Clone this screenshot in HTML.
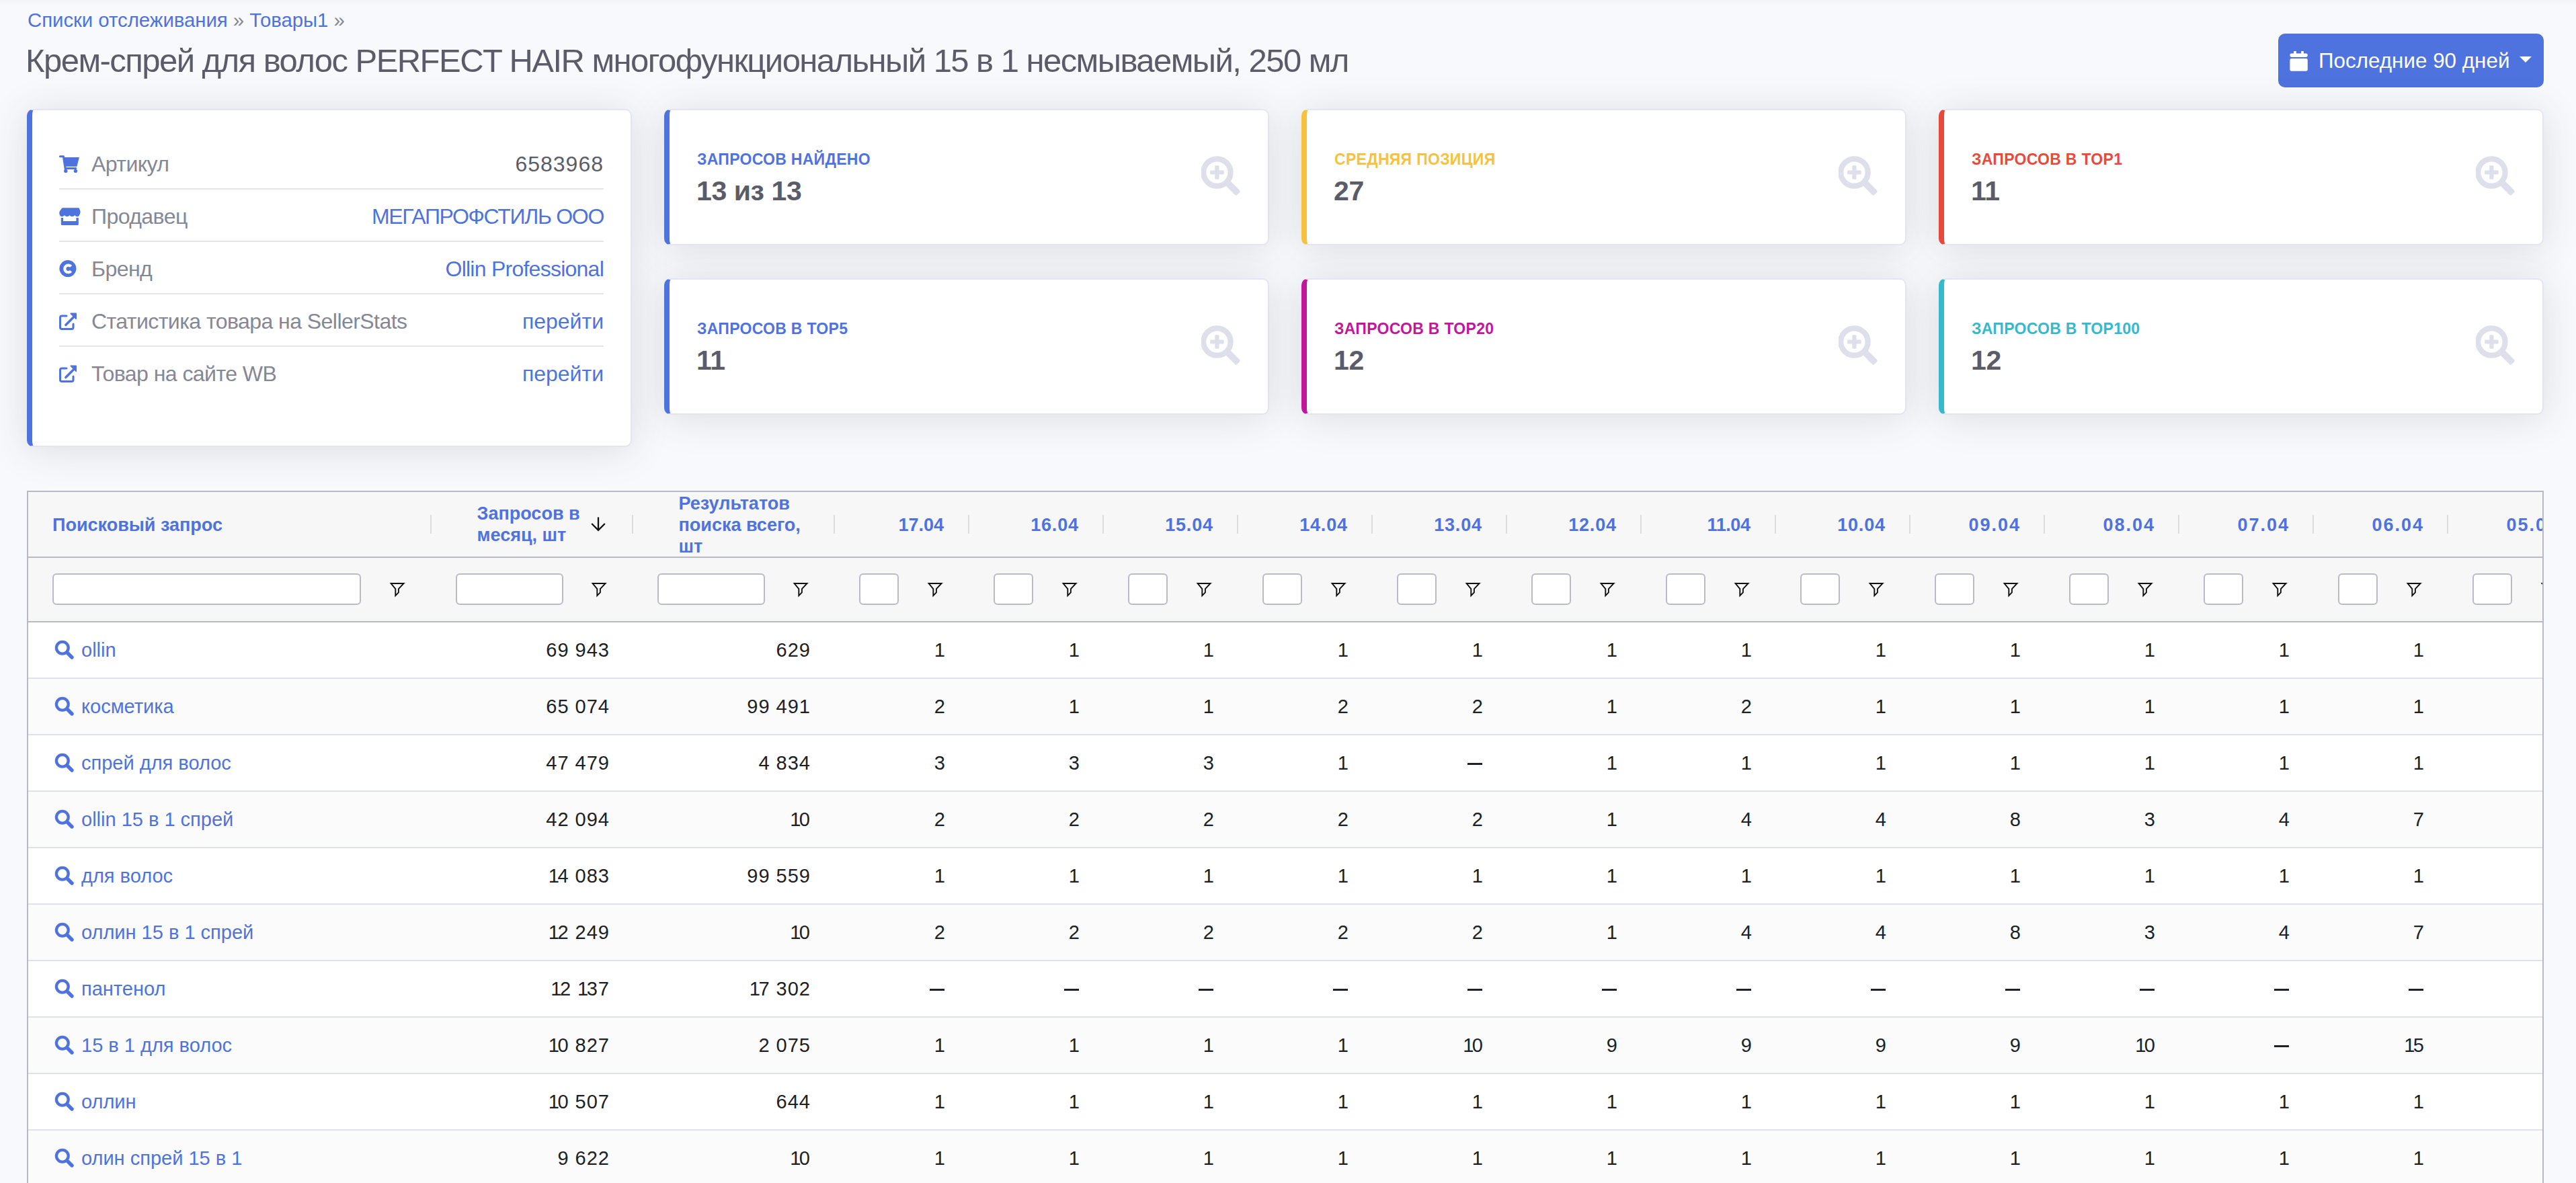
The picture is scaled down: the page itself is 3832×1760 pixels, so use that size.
<!DOCTYPE html>
<html><head><meta charset="utf-8">
<style>
*{box-sizing:border-box;margin:0;padding:0}
html,body{width:3832px;height:1760px;overflow:hidden;background:#f8f9fc linear-gradient(rgba(58,59,69,.03),rgba(58,59,69,0) 9px) no-repeat;font-family:"Liberation Sans",sans-serif;}
.abs{position:absolute}
.bc{left:41px;top:13px;font-size:29.3px;color:#4e73df;white-space:nowrap}
.title{left:38px;top:62px;font-size:49px;letter-spacing:-1.55px;color:#5a5c69;white-space:nowrap}
.btn{left:3389px;top:50px;width:395px;height:80px;background:#4e73df;border-radius:10px;color:#fff;font-size:32px}
.btn .t{position:absolute;left:60px;top:23px;font-size:31.4px;white-space:nowrap}
.btn svg{position:absolute}
.card{background:#fff;border-radius:10px;box-shadow:0 5px 56px rgba(58,59,69,.15);border:2px solid #e3e6f0;border-left:8px solid #4e73df}
.card .lb{display:none}
.info{left:40px;top:162px;width:900px;height:503px}
.row{position:absolute;left:40px;width:810px;height:78px;font-size:32px;color:#858796}
.row .ln{position:absolute;left:0;right:0;bottom:0;height:2px;background:#e6e6e6}
.row .k{position:absolute;left:48px;top:21.5px;letter-spacing:-0.55px;white-space:nowrap}
.row .v{position:absolute;right:0;top:21.5px;color:#4e73df;white-space:nowrap}
.row .ic{position:absolute;left:0;top:20px}
.stat{width:900px;height:203px}
.stat .l{position:absolute;left:41px;top:59.5px;font-size:23px;letter-spacing:0.3px;font-weight:bold;text-transform:uppercase;white-space:nowrap}
.stat .n{position:absolute;left:40px;top:96.5px;font-size:41px;letter-spacing:-0.4px;font-weight:bold;color:#5a5c69;white-space:nowrap}
.stat svg{position:absolute;left:791px;top:68px}
.tbl{left:40px;top:730px;width:3744px;height:1100px;border:2px solid #b7bac5;background:#fff;overflow:hidden}
.thead{position:absolute;left:0;top:0;width:3800px;height:98px;background:#f7f7f7;border-bottom:2px solid #b7bac5}
.frow{position:absolute;left:0;top:98px;width:3800px;height:96px;background:#f7f7f7;border-bottom:2px solid #b7bac5}
.sep{position:absolute;top:34px;width:2px;height:28px;background:#dcdcdc}
.hd{position:absolute;font-size:27px;font-weight:bold;color:#4e73df;white-space:nowrap;line-height:32px}
.dt{text-align:right}
.inp{position:absolute;height:47px;background:#fff;border:2px solid #b9bcc4;border-radius:6px}
.tr{position:absolute;left:0;width:3800px;height:84px;border-bottom:2px solid #dde2ec}
.td{position:absolute;font-size:29px;color:#1d2124;white-space:nowrap;line-height:32px}
.num{width:200px;text-align:right;letter-spacing:1px}
.tq{color:#4e73df}
.q{position:absolute}
.si{display:block}
.arr{position:absolute}
.dash{position:absolute;width:22.4px;height:3px;background:#1d2124}

</style></head><body>
<div class="abs bc">Списки отслеживания <span style="color:#858796">»</span> Товары1 <span style="color:#858796">»</span></div>
<div class="abs title">Крем-спрей для волос PERFECT HAIR многофункциональный 15 в 1 несмываемый, 250 мл</div>
<div class="abs btn">
<svg style="left:17px;top:26px" width="28" height="30" viewBox="0 0 28 30"><rect x="6.1" y="-0.4" width="3.8" height="6" rx="1.6" fill="#fff"/><rect x="17.1" y="-0.4" width="3.8" height="6" rx="1.6" fill="#fff"/><rect x="0.4" y="3.4" width="26.4" height="5.5" rx="2.4" fill="#fff"/><rect x="0.4" y="11" width="26.4" height="18.8" rx="2.4" fill="#fff"/></svg>
<div class="t">Последние 90 дней</div>
<svg style="left:359px;top:34px" width="18" height="10" viewBox="0 0 18 10"><path d="M0 0H18L9 9Z" fill="#fff"/></svg>
</div>

<div class="abs card info"><div class="lb" style="background:#4e73df"></div>
 <div class="row" style="top:40px"><svg class="ic" style="top:27px" width="32" height="28" viewBox="0 0 32 28"><path d="M1.5 1.7H6.4L9.8 24" fill="none" stroke="#4e73df" stroke-width="3.1" stroke-linecap="round" stroke-linejoin="round"/><path d="M7.4 3.6H29.2L25.9 16.2H9.9Z" fill="#4e73df" stroke="#4e73df" stroke-width="1.2" stroke-linejoin="round"/><rect x="9.5" y="18.1" width="16.8" height="2.8" rx="1.4" fill="#4e73df"/><circle cx="9.8" cy="23.4" r="2.7" fill="#4e73df"/><circle cx="24.4" cy="23.4" r="2.7" fill="#4e73df"/></svg><div class="k">Артикул</div><div class="v" style="color:#5a5c69;letter-spacing:1px">6583968</div><div class="ln"></div></div>
 <div class="row" style="top:118px"><svg class="ic" style="top:27px" width="32" height="28" viewBox="0 0 32 28"><path d="M6.5 0.3H28.5Q29.5 0.3 30 1.2L31.2 4.5Q32 7 31 9Q29.7 13.2 27 13.2Q24.6 13.2 23.2 11.2Q21.6 13.2 19.3 13.2Q17 13.2 15.5 11.2Q14 13.2 11.7 13.2Q9.5 13.2 7.9 11.2Q6.5 13.2 4.2 13.2Q1 13.2 0.3 9Q0 7 0.9 5L3.7 1.2Q4.3 0.3 5.5 0.3Z" fill="#4e73df"/><path d="M2.8 14.9H6V20H25.4V14.9H28.8V24.7Q28.8 26.1 27.4 26.1H4.2Q2.8 26.1 2.8 24.7Z" fill="#4e73df"/></svg><div class="k">Продавец</div><div class="v" style="letter-spacing:-1.3px">МЕГАПРОФСТИЛЬ ООО</div><div class="ln"></div></div>
 <div class="row" style="top:196px"><svg class="ic" style="top:27px" width="28" height="28" viewBox="0 0 28 28"><circle cx="12.9" cy="12.6" r="12.5" fill="#4e73df"/><path d="M17.6 9.4A5.3 5.3 0 1 0 17.6 16.4" fill="none" stroke="#fff" stroke-width="4.2"/></svg><div class="k">Бренд</div><div class="v" style="letter-spacing:-0.75px">Ollin Professional</div><div class="ln"></div></div>
 <div class="row" style="top:274px"><svg class="ic" style="top:27px" width="28" height="28" viewBox="0 0 28 28"><path d="M11 5H4Q1.5 5 1.5 7.5V22Q1.5 24.5 4 24.5H18.5Q21 24.5 21 22V17" fill="none" stroke="#4e73df" stroke-width="3" stroke-linecap="round"/><path d="M9.8 18.5L22.5 5.8" stroke="#4e73df" stroke-width="3.4" stroke-linecap="round"/><path d="M17.3 1.4H25.1V9.2Z" fill="#4e73df" stroke="#4e73df" stroke-width="1.8" stroke-linejoin="round"/></svg><div class="k">Статистика товара на SellerStats</div><div class="v">перейти</div><div class="ln"></div></div>
 <div class="row" style="top:352px"><svg class="ic" style="top:27px" width="28" height="28" viewBox="0 0 28 28"><path d="M11 5H4Q1.5 5 1.5 7.5V22Q1.5 24.5 4 24.5H18.5Q21 24.5 21 22V17" fill="none" stroke="#4e73df" stroke-width="3" stroke-linecap="round"/><path d="M9.8 18.5L22.5 5.8" stroke="#4e73df" stroke-width="3.4" stroke-linecap="round"/><path d="M17.3 1.4H25.1V9.2Z" fill="#4e73df" stroke="#4e73df" stroke-width="1.8" stroke-linejoin="round"/></svg><div class="k">Товар на сайте WB</div><div class="v">перейти</div></div>
</div>

<div class="abs card stat" style="left:988px;top:162px"><div class="lb" style="background:#4e73df"></div><div class="l" style="color:#4e73df">Запросов найдено</div><div class="n">13 из 13</div><svg width="62" height="62" viewBox="0 0 62 62"><circle cx="23.4" cy="24.5" r="20.2" fill="none" stroke="#dddfeb" stroke-width="8.2"/><rect x="20.3" y="14.2" width="6.2" height="20.6" rx="1.4" fill="#dddfeb"/><rect x="13.1" y="21.4" width="20.6" height="6.2" rx="1.4" fill="#dddfeb"/><rect x="-11" y="-4.9" width="22" height="9.8" rx="2.2" fill="#dddfeb" transform="translate(47.3 48.3) rotate(45)"/></svg></div>
<div class="abs card stat" style="left:1936px;top:162px;border-left-color:#f6c23e"><div class="lb"></div><div class="l" style="color:#f6c23e">Средняя позиция</div><div class="n">27</div><svg width="62" height="62" viewBox="0 0 62 62"><circle cx="23.4" cy="24.5" r="20.2" fill="none" stroke="#dddfeb" stroke-width="8.2"/><rect x="20.3" y="14.2" width="6.2" height="20.6" rx="1.4" fill="#dddfeb"/><rect x="13.1" y="21.4" width="20.6" height="6.2" rx="1.4" fill="#dddfeb"/><rect x="-11" y="-4.9" width="22" height="9.8" rx="2.2" fill="#dddfeb" transform="translate(47.3 48.3) rotate(45)"/></svg></div>
<div class="abs card stat" style="left:2884px;top:162px;border-left-color:#e74a3b"><div class="lb"></div><div class="l" style="color:#e74a3b">Запросов в TOP1</div><div class="n">11</div><svg width="62" height="62" viewBox="0 0 62 62"><circle cx="23.4" cy="24.5" r="20.2" fill="none" stroke="#dddfeb" stroke-width="8.2"/><rect x="20.3" y="14.2" width="6.2" height="20.6" rx="1.4" fill="#dddfeb"/><rect x="13.1" y="21.4" width="20.6" height="6.2" rx="1.4" fill="#dddfeb"/><rect x="-11" y="-4.9" width="22" height="9.8" rx="2.2" fill="#dddfeb" transform="translate(47.3 48.3) rotate(45)"/></svg></div>
<div class="abs card stat" style="left:988px;top:414px"><div class="lb" style="background:#4e73df"></div><div class="l" style="color:#4e73df">Запросов в TOP5</div><div class="n">11</div><svg width="62" height="62" viewBox="0 0 62 62"><circle cx="23.4" cy="24.5" r="20.2" fill="none" stroke="#dddfeb" stroke-width="8.2"/><rect x="20.3" y="14.2" width="6.2" height="20.6" rx="1.4" fill="#dddfeb"/><rect x="13.1" y="21.4" width="20.6" height="6.2" rx="1.4" fill="#dddfeb"/><rect x="-11" y="-4.9" width="22" height="9.8" rx="2.2" fill="#dddfeb" transform="translate(47.3 48.3) rotate(45)"/></svg></div>
<div class="abs card stat" style="left:1936px;top:414px;border-left-color:#c1179b"><div class="lb"></div><div class="l" style="color:#c1179b">Запросов в TOP20</div><div class="n">12</div><svg width="62" height="62" viewBox="0 0 62 62"><circle cx="23.4" cy="24.5" r="20.2" fill="none" stroke="#dddfeb" stroke-width="8.2"/><rect x="20.3" y="14.2" width="6.2" height="20.6" rx="1.4" fill="#dddfeb"/><rect x="13.1" y="21.4" width="20.6" height="6.2" rx="1.4" fill="#dddfeb"/><rect x="-11" y="-4.9" width="22" height="9.8" rx="2.2" fill="#dddfeb" transform="translate(47.3 48.3) rotate(45)"/></svg></div>
<div class="abs card stat" style="left:2884px;top:414px;border-left-color:#36b9cc"><div class="lb"></div><div class="l" style="color:#36b9cc">Запросов в TOP100</div><div class="n">12</div><svg width="62" height="62" viewBox="0 0 62 62"><circle cx="23.4" cy="24.5" r="20.2" fill="none" stroke="#dddfeb" stroke-width="8.2"/><rect x="20.3" y="14.2" width="6.2" height="20.6" rx="1.4" fill="#dddfeb"/><rect x="13.1" y="21.4" width="20.6" height="6.2" rx="1.4" fill="#dddfeb"/><rect x="-11" y="-4.9" width="22" height="9.8" rx="2.2" fill="#dddfeb" transform="translate(47.3 48.3) rotate(45)"/></svg></div>

<div class="abs tbl">
<div class="thead"></div><div class="frow"></div>
<div class="sep" style="left:598px"></div>
<div class="sep" style="left:898px"></div>
<div class="sep" style="left:1198px"></div>
<div class="sep" style="left:1398px"></div>
<div class="sep" style="left:1598px"></div>
<div class="sep" style="left:1798px"></div>
<div class="sep" style="left:1998px"></div>
<div class="sep" style="left:2198px"></div>
<div class="sep" style="left:2398px"></div>
<div class="sep" style="left:2598px"></div>
<div class="sep" style="left:2798px"></div>
<div class="sep" style="left:2998px"></div>
<div class="sep" style="left:3198px"></div>
<div class="sep" style="left:3398px"></div>
<div class="sep" style="left:3598px"></div>
<div class="hd" style="left:36px;top:32.5px">Поисковый запрос</div>
<div class="hd h2" style="left:667.5px;top:16px">Запросов в<br>месяц, шт</div>
<svg class="arr" style="left:836px;top:36px" width="24" height="24" viewBox="0 0 24 24"><path d="M12 1.4V20M2.2 11L12 20.8L21.8 11" fill="none" stroke="#111" stroke-width="2.3"/></svg>
<div class="hd h2" style="left:967.5px;top:0.5px">Результатов<br>поиска всего,<br>шт</div>
<div class="hd dt" style="left:1262px;top:33px;width:100px;letter-spacing:0px">17.04</div>
<div class="hd dt" style="left:1462.8px;top:33px;width:100px;letter-spacing:0.8px">16.04</div>
<div class="hd dt" style="left:1662.8px;top:33px;width:100px;letter-spacing:0.8px">15.04</div>
<div class="hd dt" style="left:1862.8px;top:33px;width:100px;letter-spacing:0.8px">14.04</div>
<div class="hd dt" style="left:2062.8px;top:33px;width:100px;letter-spacing:0.8px">13.04</div>
<div class="hd dt" style="left:2262.8px;top:33px;width:100px;letter-spacing:0.8px">12.04</div>
<div class="hd dt" style="left:2461.6px;top:33px;width:100px;letter-spacing:-0.4px">11.04</div>
<div class="hd dt" style="left:2662.8px;top:33px;width:100px;letter-spacing:0.8px">10.04</div>
<div class="hd dt" style="left:2864.0px;top:33px;width:100px;letter-spacing:2.0px">09.04</div>
<div class="hd dt" style="left:3064.0px;top:33px;width:100px;letter-spacing:2.0px">08.04</div>
<div class="hd dt" style="left:3264.0px;top:33px;width:100px;letter-spacing:2.0px">07.04</div>
<div class="hd dt" style="left:3464.0px;top:33px;width:100px;letter-spacing:2.0px">06.04</div>
<div class="hd dt" style="left:3664.0px;top:33px;width:100px;letter-spacing:2.0px">05.04</div>
<div class="inp" style="left:36px;top:121px;width:459px"></div>
<div style="position:absolute;left:537px;top:134px"><svg class="fi" width="24" height="24" viewBox="0 0 24 24"><path d="M2.6 2H21.6L13.9 10.1V15.4L9.3 20.1V10.1Z" fill="none" stroke="#111" stroke-width="1.9" stroke-linejoin="miter" stroke-miterlimit="6"/></svg></div>
<div class="inp" style="left:636px;top:121px;width:160px"></div>
<div style="position:absolute;left:837px;top:134px"><svg class="fi" width="24" height="24" viewBox="0 0 24 24"><path d="M2.6 2H21.6L13.9 10.1V15.4L9.3 20.1V10.1Z" fill="none" stroke="#111" stroke-width="1.9" stroke-linejoin="miter" stroke-miterlimit="6"/></svg></div>
<div class="inp" style="left:936px;top:121px;width:160px"></div>
<div style="position:absolute;left:1137px;top:134px"><svg class="fi" width="24" height="24" viewBox="0 0 24 24"><path d="M2.6 2H21.6L13.9 10.1V15.4L9.3 20.1V10.1Z" fill="none" stroke="#111" stroke-width="1.9" stroke-linejoin="miter" stroke-miterlimit="6"/></svg></div>
<div class="inp" style="left:1236px;top:121px;width:59px"></div>
<div style="position:absolute;left:1337px;top:134px"><svg class="fi" width="24" height="24" viewBox="0 0 24 24"><path d="M2.6 2H21.6L13.9 10.1V15.4L9.3 20.1V10.1Z" fill="none" stroke="#111" stroke-width="1.9" stroke-linejoin="miter" stroke-miterlimit="6"/></svg></div>
<div class="inp" style="left:1436px;top:121px;width:59px"></div>
<div style="position:absolute;left:1537px;top:134px"><svg class="fi" width="24" height="24" viewBox="0 0 24 24"><path d="M2.6 2H21.6L13.9 10.1V15.4L9.3 20.1V10.1Z" fill="none" stroke="#111" stroke-width="1.9" stroke-linejoin="miter" stroke-miterlimit="6"/></svg></div>
<div class="inp" style="left:1636px;top:121px;width:59px"></div>
<div style="position:absolute;left:1737px;top:134px"><svg class="fi" width="24" height="24" viewBox="0 0 24 24"><path d="M2.6 2H21.6L13.9 10.1V15.4L9.3 20.1V10.1Z" fill="none" stroke="#111" stroke-width="1.9" stroke-linejoin="miter" stroke-miterlimit="6"/></svg></div>
<div class="inp" style="left:1836px;top:121px;width:59px"></div>
<div style="position:absolute;left:1937px;top:134px"><svg class="fi" width="24" height="24" viewBox="0 0 24 24"><path d="M2.6 2H21.6L13.9 10.1V15.4L9.3 20.1V10.1Z" fill="none" stroke="#111" stroke-width="1.9" stroke-linejoin="miter" stroke-miterlimit="6"/></svg></div>
<div class="inp" style="left:2036px;top:121px;width:59px"></div>
<div style="position:absolute;left:2137px;top:134px"><svg class="fi" width="24" height="24" viewBox="0 0 24 24"><path d="M2.6 2H21.6L13.9 10.1V15.4L9.3 20.1V10.1Z" fill="none" stroke="#111" stroke-width="1.9" stroke-linejoin="miter" stroke-miterlimit="6"/></svg></div>
<div class="inp" style="left:2236px;top:121px;width:59px"></div>
<div style="position:absolute;left:2337px;top:134px"><svg class="fi" width="24" height="24" viewBox="0 0 24 24"><path d="M2.6 2H21.6L13.9 10.1V15.4L9.3 20.1V10.1Z" fill="none" stroke="#111" stroke-width="1.9" stroke-linejoin="miter" stroke-miterlimit="6"/></svg></div>
<div class="inp" style="left:2436px;top:121px;width:59px"></div>
<div style="position:absolute;left:2537px;top:134px"><svg class="fi" width="24" height="24" viewBox="0 0 24 24"><path d="M2.6 2H21.6L13.9 10.1V15.4L9.3 20.1V10.1Z" fill="none" stroke="#111" stroke-width="1.9" stroke-linejoin="miter" stroke-miterlimit="6"/></svg></div>
<div class="inp" style="left:2636px;top:121px;width:59px"></div>
<div style="position:absolute;left:2737px;top:134px"><svg class="fi" width="24" height="24" viewBox="0 0 24 24"><path d="M2.6 2H21.6L13.9 10.1V15.4L9.3 20.1V10.1Z" fill="none" stroke="#111" stroke-width="1.9" stroke-linejoin="miter" stroke-miterlimit="6"/></svg></div>
<div class="inp" style="left:2836px;top:121px;width:59px"></div>
<div style="position:absolute;left:2937px;top:134px"><svg class="fi" width="24" height="24" viewBox="0 0 24 24"><path d="M2.6 2H21.6L13.9 10.1V15.4L9.3 20.1V10.1Z" fill="none" stroke="#111" stroke-width="1.9" stroke-linejoin="miter" stroke-miterlimit="6"/></svg></div>
<div class="inp" style="left:3036px;top:121px;width:59px"></div>
<div style="position:absolute;left:3137px;top:134px"><svg class="fi" width="24" height="24" viewBox="0 0 24 24"><path d="M2.6 2H21.6L13.9 10.1V15.4L9.3 20.1V10.1Z" fill="none" stroke="#111" stroke-width="1.9" stroke-linejoin="miter" stroke-miterlimit="6"/></svg></div>
<div class="inp" style="left:3236px;top:121px;width:59px"></div>
<div style="position:absolute;left:3337px;top:134px"><svg class="fi" width="24" height="24" viewBox="0 0 24 24"><path d="M2.6 2H21.6L13.9 10.1V15.4L9.3 20.1V10.1Z" fill="none" stroke="#111" stroke-width="1.9" stroke-linejoin="miter" stroke-miterlimit="6"/></svg></div>
<div class="inp" style="left:3436px;top:121px;width:59px"></div>
<div style="position:absolute;left:3537px;top:134px"><svg class="fi" width="24" height="24" viewBox="0 0 24 24"><path d="M2.6 2H21.6L13.9 10.1V15.4L9.3 20.1V10.1Z" fill="none" stroke="#111" stroke-width="1.9" stroke-linejoin="miter" stroke-miterlimit="6"/></svg></div>
<div class="inp" style="left:3636px;top:121px;width:59px"></div>
<div style="position:absolute;left:3737px;top:134px"><svg class="fi" width="24" height="24" viewBox="0 0 24 24"><path d="M2.6 2H21.6L13.9 10.1V15.4L9.3 20.1V10.1Z" fill="none" stroke="#111" stroke-width="1.9" stroke-linejoin="miter" stroke-miterlimit="6"/></svg></div>
<div class="tr" style="top:194.00px;background:#fff"></div>
<div class="q" style="left:39px;top:220.00px"><svg class="si" width="30" height="30" viewBox="0 0 30 30"><circle cx="11.8" cy="11.7" r="8.9" fill="none" stroke="#4e73df" stroke-width="4.3"/><path d="M19 19L26 26" stroke="#4e73df" stroke-width="5.4" stroke-linecap="round"/></svg></div>
<div class="td tq" style="left:79px;top:218.50px">ollin</div>
<div class="td num" style="left:665px;top:218.50px">69 943</div>
<div class="td num" style="left:964px;top:218.50px">629</div>
<div class="td num" style="left:1165px;top:218.50px">1</div>
<div class="td num" style="left:1365px;top:218.50px">1</div>
<div class="td num" style="left:1565px;top:218.50px">1</div>
<div class="td num" style="left:1765px;top:218.50px">1</div>
<div class="td num" style="left:1965px;top:218.50px">1</div>
<div class="td num" style="left:2165px;top:218.50px">1</div>
<div class="td num" style="left:2365px;top:218.50px">1</div>
<div class="td num" style="left:2565px;top:218.50px">1</div>
<div class="td num" style="left:2765px;top:218.50px">1</div>
<div class="td num" style="left:2965px;top:218.50px">1</div>
<div class="td num" style="left:3165px;top:218.50px">1</div>
<div class="td num" style="left:3365px;top:218.50px">1</div>
<div class="tr" style="top:278.00px;background:#fbfbfb"></div>
<div class="q" style="left:39px;top:304.00px"><svg class="si" width="30" height="30" viewBox="0 0 30 30"><circle cx="11.8" cy="11.7" r="8.9" fill="none" stroke="#4e73df" stroke-width="4.3"/><path d="M19 19L26 26" stroke="#4e73df" stroke-width="5.4" stroke-linecap="round"/></svg></div>
<div class="td tq" style="left:79px;top:302.50px">косметика</div>
<div class="td num" style="left:665px;top:302.50px">65 074</div>
<div class="td num" style="left:964px;top:302.50px">99 491</div>
<div class="td num" style="left:1165px;top:302.50px">2</div>
<div class="td num" style="left:1365px;top:302.50px">1</div>
<div class="td num" style="left:1565px;top:302.50px">1</div>
<div class="td num" style="left:1765px;top:302.50px">2</div>
<div class="td num" style="left:1965px;top:302.50px">2</div>
<div class="td num" style="left:2165px;top:302.50px">1</div>
<div class="td num" style="left:2365px;top:302.50px">2</div>
<div class="td num" style="left:2565px;top:302.50px">1</div>
<div class="td num" style="left:2765px;top:302.50px">1</div>
<div class="td num" style="left:2965px;top:302.50px">1</div>
<div class="td num" style="left:3165px;top:302.50px">1</div>
<div class="td num" style="left:3365px;top:302.50px">1</div>
<div class="tr" style="top:362.00px;background:#fff"></div>
<div class="q" style="left:39px;top:388.00px"><svg class="si" width="30" height="30" viewBox="0 0 30 30"><circle cx="11.8" cy="11.7" r="8.9" fill="none" stroke="#4e73df" stroke-width="4.3"/><path d="M19 19L26 26" stroke="#4e73df" stroke-width="5.4" stroke-linecap="round"/></svg></div>
<div class="td tq" style="left:79px;top:386.50px">спрей для волос</div>
<div class="td num" style="left:665px;top:386.50px">47 479</div>
<div class="td num" style="left:964px;top:386.50px">4 834</div>
<div class="td num" style="left:1165px;top:386.50px">3</div>
<div class="td num" style="left:1365px;top:386.50px">3</div>
<div class="td num" style="left:1565px;top:386.50px">3</div>
<div class="td num" style="left:1765px;top:386.50px">1</div>
<div class="dash" style="left:2140.60px;top:403.10px"></div>
<div class="td num" style="left:2165px;top:386.50px">1</div>
<div class="td num" style="left:2365px;top:386.50px">1</div>
<div class="td num" style="left:2565px;top:386.50px">1</div>
<div class="td num" style="left:2765px;top:386.50px">1</div>
<div class="td num" style="left:2965px;top:386.50px">1</div>
<div class="td num" style="left:3165px;top:386.50px">1</div>
<div class="td num" style="left:3365px;top:386.50px">1</div>
<div class="tr" style="top:446.00px;background:#fbfbfb"></div>
<div class="q" style="left:39px;top:472.00px"><svg class="si" width="30" height="30" viewBox="0 0 30 30"><circle cx="11.8" cy="11.7" r="8.9" fill="none" stroke="#4e73df" stroke-width="4.3"/><path d="M19 19L26 26" stroke="#4e73df" stroke-width="5.4" stroke-linecap="round"/></svg></div>
<div class="td tq" style="left:79px;top:470.50px">ollin 15 в 1 спрей</div>
<div class="td num" style="left:665px;top:470.50px">42 094</div>
<div class="td num" style="left:964px;top:470.50px"><span style="letter-spacing:-2.5px">1</span>0</div>
<div class="td num" style="left:1165px;top:470.50px">2</div>
<div class="td num" style="left:1365px;top:470.50px">2</div>
<div class="td num" style="left:1565px;top:470.50px">2</div>
<div class="td num" style="left:1765px;top:470.50px">2</div>
<div class="td num" style="left:1965px;top:470.50px">2</div>
<div class="td num" style="left:2165px;top:470.50px">1</div>
<div class="td num" style="left:2365px;top:470.50px">4</div>
<div class="td num" style="left:2565px;top:470.50px">4</div>
<div class="td num" style="left:2765px;top:470.50px">8</div>
<div class="td num" style="left:2965px;top:470.50px">3</div>
<div class="td num" style="left:3165px;top:470.50px">4</div>
<div class="td num" style="left:3365px;top:470.50px">7</div>
<div class="tr" style="top:530.00px;background:#fff"></div>
<div class="q" style="left:39px;top:556.00px"><svg class="si" width="30" height="30" viewBox="0 0 30 30"><circle cx="11.8" cy="11.7" r="8.9" fill="none" stroke="#4e73df" stroke-width="4.3"/><path d="M19 19L26 26" stroke="#4e73df" stroke-width="5.4" stroke-linecap="round"/></svg></div>
<div class="td tq" style="left:79px;top:554.50px">для волос</div>
<div class="td num" style="left:665px;top:554.50px"><span style="letter-spacing:-2.5px">1</span>4 083</div>
<div class="td num" style="left:964px;top:554.50px">99 559</div>
<div class="td num" style="left:1165px;top:554.50px">1</div>
<div class="td num" style="left:1365px;top:554.50px">1</div>
<div class="td num" style="left:1565px;top:554.50px">1</div>
<div class="td num" style="left:1765px;top:554.50px">1</div>
<div class="td num" style="left:1965px;top:554.50px">1</div>
<div class="td num" style="left:2165px;top:554.50px">1</div>
<div class="td num" style="left:2365px;top:554.50px">1</div>
<div class="td num" style="left:2565px;top:554.50px">1</div>
<div class="td num" style="left:2765px;top:554.50px">1</div>
<div class="td num" style="left:2965px;top:554.50px">1</div>
<div class="td num" style="left:3165px;top:554.50px">1</div>
<div class="td num" style="left:3365px;top:554.50px">1</div>
<div class="tr" style="top:614.00px;background:#fbfbfb"></div>
<div class="q" style="left:39px;top:640.00px"><svg class="si" width="30" height="30" viewBox="0 0 30 30"><circle cx="11.8" cy="11.7" r="8.9" fill="none" stroke="#4e73df" stroke-width="4.3"/><path d="M19 19L26 26" stroke="#4e73df" stroke-width="5.4" stroke-linecap="round"/></svg></div>
<div class="td tq" style="left:79px;top:638.50px">оллин 15 в 1 спрей</div>
<div class="td num" style="left:665px;top:638.50px"><span style="letter-spacing:-2.5px">1</span>2 249</div>
<div class="td num" style="left:964px;top:638.50px"><span style="letter-spacing:-2.5px">1</span>0</div>
<div class="td num" style="left:1165px;top:638.50px">2</div>
<div class="td num" style="left:1365px;top:638.50px">2</div>
<div class="td num" style="left:1565px;top:638.50px">2</div>
<div class="td num" style="left:1765px;top:638.50px">2</div>
<div class="td num" style="left:1965px;top:638.50px">2</div>
<div class="td num" style="left:2165px;top:638.50px">1</div>
<div class="td num" style="left:2365px;top:638.50px">4</div>
<div class="td num" style="left:2565px;top:638.50px">4</div>
<div class="td num" style="left:2765px;top:638.50px">8</div>
<div class="td num" style="left:2965px;top:638.50px">3</div>
<div class="td num" style="left:3165px;top:638.50px">4</div>
<div class="td num" style="left:3365px;top:638.50px">7</div>
<div class="tr" style="top:698.00px;background:#fff"></div>
<div class="q" style="left:39px;top:724.00px"><svg class="si" width="30" height="30" viewBox="0 0 30 30"><circle cx="11.8" cy="11.7" r="8.9" fill="none" stroke="#4e73df" stroke-width="4.3"/><path d="M19 19L26 26" stroke="#4e73df" stroke-width="5.4" stroke-linecap="round"/></svg></div>
<div class="td tq" style="left:79px;top:722.50px">пантенол</div>
<div class="td num" style="left:665px;top:722.50px"><span style="letter-spacing:-2.5px">1</span>2 <span style="letter-spacing:-2.5px">1</span>37</div>
<div class="td num" style="left:964px;top:722.50px"><span style="letter-spacing:-2.5px">1</span>7 302</div>
<div class="dash" style="left:1340.60px;top:739.10px"></div>
<div class="dash" style="left:1540.60px;top:739.10px"></div>
<div class="dash" style="left:1740.60px;top:739.10px"></div>
<div class="dash" style="left:1940.60px;top:739.10px"></div>
<div class="dash" style="left:2140.60px;top:739.10px"></div>
<div class="dash" style="left:2340.60px;top:739.10px"></div>
<div class="dash" style="left:2540.60px;top:739.10px"></div>
<div class="dash" style="left:2740.60px;top:739.10px"></div>
<div class="dash" style="left:2940.60px;top:739.10px"></div>
<div class="dash" style="left:3140.60px;top:739.10px"></div>
<div class="dash" style="left:3340.60px;top:739.10px"></div>
<div class="dash" style="left:3540.60px;top:739.10px"></div>
<div class="tr" style="top:782.00px;background:#fbfbfb"></div>
<div class="q" style="left:39px;top:808.00px"><svg class="si" width="30" height="30" viewBox="0 0 30 30"><circle cx="11.8" cy="11.7" r="8.9" fill="none" stroke="#4e73df" stroke-width="4.3"/><path d="M19 19L26 26" stroke="#4e73df" stroke-width="5.4" stroke-linecap="round"/></svg></div>
<div class="td tq" style="left:79px;top:806.50px">15 в 1 для волос</div>
<div class="td num" style="left:665px;top:806.50px"><span style="letter-spacing:-2.5px">1</span>0 827</div>
<div class="td num" style="left:964px;top:806.50px">2 075</div>
<div class="td num" style="left:1165px;top:806.50px">1</div>
<div class="td num" style="left:1365px;top:806.50px">1</div>
<div class="td num" style="left:1565px;top:806.50px">1</div>
<div class="td num" style="left:1765px;top:806.50px">1</div>
<div class="td num" style="left:1965px;top:806.50px"><span style="letter-spacing:-2.5px">1</span>0</div>
<div class="td num" style="left:2165px;top:806.50px">9</div>
<div class="td num" style="left:2365px;top:806.50px">9</div>
<div class="td num" style="left:2565px;top:806.50px">9</div>
<div class="td num" style="left:2765px;top:806.50px">9</div>
<div class="td num" style="left:2965px;top:806.50px"><span style="letter-spacing:-2.5px">1</span>0</div>
<div class="dash" style="left:3340.60px;top:823.10px"></div>
<div class="td num" style="left:3365px;top:806.50px"><span style="letter-spacing:-2.5px">1</span>5</div>
<div class="tr" style="top:866.00px;background:#fff"></div>
<div class="q" style="left:39px;top:892.00px"><svg class="si" width="30" height="30" viewBox="0 0 30 30"><circle cx="11.8" cy="11.7" r="8.9" fill="none" stroke="#4e73df" stroke-width="4.3"/><path d="M19 19L26 26" stroke="#4e73df" stroke-width="5.4" stroke-linecap="round"/></svg></div>
<div class="td tq" style="left:79px;top:890.50px">оллин</div>
<div class="td num" style="left:665px;top:890.50px"><span style="letter-spacing:-2.5px">1</span>0 507</div>
<div class="td num" style="left:964px;top:890.50px">644</div>
<div class="td num" style="left:1165px;top:890.50px">1</div>
<div class="td num" style="left:1365px;top:890.50px">1</div>
<div class="td num" style="left:1565px;top:890.50px">1</div>
<div class="td num" style="left:1765px;top:890.50px">1</div>
<div class="td num" style="left:1965px;top:890.50px">1</div>
<div class="td num" style="left:2165px;top:890.50px">1</div>
<div class="td num" style="left:2365px;top:890.50px">1</div>
<div class="td num" style="left:2565px;top:890.50px">1</div>
<div class="td num" style="left:2765px;top:890.50px">1</div>
<div class="td num" style="left:2965px;top:890.50px">1</div>
<div class="td num" style="left:3165px;top:890.50px">1</div>
<div class="td num" style="left:3365px;top:890.50px">1</div>
<div class="tr" style="top:950.00px;background:#fbfbfb"></div>
<div class="q" style="left:39px;top:976.00px"><svg class="si" width="30" height="30" viewBox="0 0 30 30"><circle cx="11.8" cy="11.7" r="8.9" fill="none" stroke="#4e73df" stroke-width="4.3"/><path d="M19 19L26 26" stroke="#4e73df" stroke-width="5.4" stroke-linecap="round"/></svg></div>
<div class="td tq" style="left:79px;top:974.50px">олин спрей 15 в 1</div>
<div class="td num" style="left:665px;top:974.50px">9 622</div>
<div class="td num" style="left:964px;top:974.50px"><span style="letter-spacing:-2.5px">1</span>0</div>
<div class="td num" style="left:1165px;top:974.50px">1</div>
<div class="td num" style="left:1365px;top:974.50px">1</div>
<div class="td num" style="left:1565px;top:974.50px">1</div>
<div class="td num" style="left:1765px;top:974.50px">1</div>
<div class="td num" style="left:1965px;top:974.50px">1</div>
<div class="td num" style="left:2165px;top:974.50px">1</div>
<div class="td num" style="left:2365px;top:974.50px">1</div>
<div class="td num" style="left:2565px;top:974.50px">1</div>
<div class="td num" style="left:2765px;top:974.50px">1</div>
<div class="td num" style="left:2965px;top:974.50px">1</div>
<div class="td num" style="left:3165px;top:974.50px">1</div>
<div class="td num" style="left:3365px;top:974.50px">1</div>
</div>

</body></html>
